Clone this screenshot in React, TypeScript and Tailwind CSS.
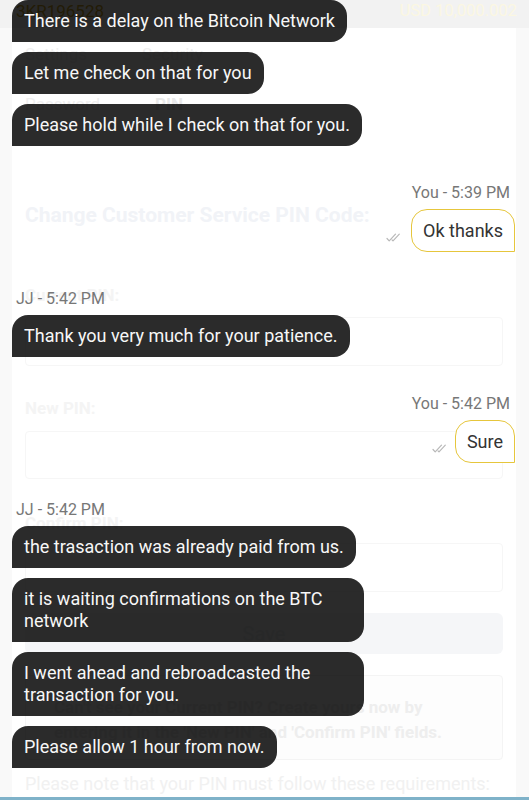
import React from "react";

const darkBubble =
  "self-start max-w-[352px] rounded-[16px] rounded-bl-none bg-black/[0.83] px-[12px] py-[10px] text-[18px] leading-[22px] text-[#f7f7f7]";

function Dark({ children, className = "" }: { children: React.ReactNode; className?: string }) {
  return <div className={darkBubble + " " + className}>{children}</div>;
}

function DoubleCheck() {
  return (
    <svg width="16" height="9" viewBox="0 0 16 9" fill="none" stroke="#b8b8b8" strokeWidth="1.2" strokeLinecap="round" strokeLinejoin="round">
      <path d="M1 5.5 L3.2 7.8 L9.5 1.2" />
      <path d="M6 6.8 L7 7.8 L13.3 1.2" />
    </svg>
  );
}

function Mine({ text, iconGap }: { text: string; iconGap: string }) {
  return (
    <div className="flex items-end justify-end">
      <div className={"mb-[10px] " + iconGap}>
        <DoubleCheck />
      </div>
      <div className="rounded-[16px] rounded-br-none border border-[#e6c63c] bg-white px-[11px] py-[9px] text-[18px] leading-[23px] text-[#333333]">
        {text}
      </div>
    </div>
  );
}

function Label({ children, right = false }: { children: React.ReactNode; right?: boolean }) {
  return (
    <div
      className={
        "h-[20px] text-[16px] leading-[20px] text-[#777777] mb-[6px] " +
        (right ? "self-end pr-[5px]" : "self-start pl-[4px]")
      }
    >
      {children}
    </div>
  );
}

export default function App() {
  return (
    <div className="relative flex h-[800px] w-[529px] flex-col overflow-hidden bg-[#f9f9f9] [font-family:Roboto,sans-serif]">
      {/* Header */}
      <div className="flex h-[28px] shrink-0 items-start justify-between bg-[#f2f2f2] pl-[16px] pr-[12px] text-[17px] leading-[22px]">
        <span className="text-[#c9a227]">3KR196528</span>
        <span className="text-[16.5px] text-[#fbf7e2]">USD 10,000.002</span>
      </div>

      {/* Page body */}
      <div className="flex flex-1 overflow-hidden">
        <div className="ml-[12px] flex w-[504px] flex-col bg-white px-[13px] pt-[14px]">
          <div className="flex h-[24px] text-[17px] leading-[24px] text-[#f0f0f0]">
            <span className="w-[117px]">Settings</span>
            <span>Security</span>
          </div>
          <div className="mt-[26px] flex h-[24px] text-[17px] leading-[24px] text-[#f0f0f0]">
            <span className="w-[130px]">Password</span>
            <span className="font-bold text-[#e9e9e9]">PIN</span>
          </div>
          <div className="mt-[85px] h-[28px] whitespace-nowrap text-[21px] font-bold leading-[28px] text-[#f1f3f7]">
            Change Customer Service PIN Code:
          </div>
          <div className="mt-[54px] h-[24px] text-[17px] font-bold leading-[24px] text-[#f4f4f4]">Current PIN:</div>
          <div className="mt-[10px] h-[49px] rounded-[4px] border border-[#f6f6f6] bg-white" />
          <div className="mt-[30px] h-[24px] text-[17px] font-bold leading-[24px] text-[#f4f4f4]">New PIN:</div>
          <div className="mt-[11px] h-[48px] rounded-[4px] border border-[#f6f6f6] bg-white" />
          <div className="mt-[32px] h-[24px] text-[17px] font-bold leading-[24px] text-[#f4f4f4]">Confirm PIN:</div>
          <div className="mt-[8px] h-[49px] rounded-[4px] border border-[#f6f6f6] bg-white" />
          <div className="mt-[21px] flex h-[41px] items-center justify-center rounded-[6px] bg-[#f5f6f8] text-[20px] text-[#e8e9eb]">
            Save
          </div>
          <div className="mt-[21px] h-[85px] rounded-[4px] border border-[#f4f4f4] bg-[#fdfdfd] pl-[28px] pt-[19px] text-[17px] font-bold leading-[25px] text-[#eeeeee]">
            Can't see your Current PIN? Create yours now by
            <br />
            entering it in the 'New PIN' and 'Confirm PIN' fields.
          </div>
          <div className="mt-[12px] whitespace-nowrap text-[18px] leading-[24px] text-[#f1f1f1]">
            Please note that your PIN must follow these requirements:
          </div>
        </div>
      </div>
      <div className="h-[3px] shrink-0 bg-[#7fb2c9]" />

      {/* Chat overlay */}
      <div className="absolute inset-0 flex flex-col pl-[12px] pr-[14px]">
        <Dark>There is a delay on the Bitcoin Network</Dark>
        <Dark className="mt-[10px]">Let me check on that for you</Dark>
        <Dark className="mt-[10px]">Please hold while I check on that for you.</Dark>

        <div className="mt-[37px] flex flex-col">
          <Label right>You - 5:39 PM</Label>
          <Mine text="Ok thanks" iconGap="mr-[9px]" />
        </div>

        <div className="mt-[37px] flex flex-col">
          <Label>JJ - 5:42 PM</Label>
          <Dark>Thank you very much for your patience.</Dark>
        </div>

        <div className="mt-[37px] flex flex-col">
          <Label right>You - 5:42 PM</Label>
          <Mine text="Sure" iconGap="mr-[7px]" />
        </div>

        <div className="mt-[37px] flex flex-col">
          <Label>JJ - 5:42 PM</Label>
          <Dark>the trasaction was already paid from us.</Dark>
          <Dark className="mt-[10px]">it is waiting confirmations on the BTC network</Dark>
          <Dark className="mt-[10px]">I went ahead and rebroadcasted the transaction for you.</Dark>
          <Dark className="mt-[10px]">Please allow 1 hour from now.</Dark>
        </div>
      </div>
    </div>
  );
}
